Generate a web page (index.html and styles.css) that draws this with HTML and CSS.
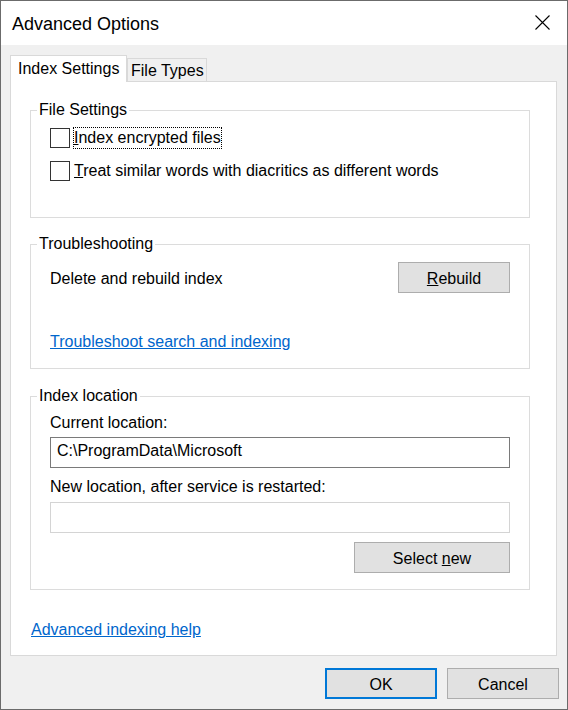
FILE: index.html
```
<!DOCTYPE html>
<html lang="en">
<head>
    <meta charset="UTF-8">
    <title>Advanced Options</title>
    <link rel="stylesheet" href="styles.css">
</head>
<body>
    <div class="window">
        <div class="titlebar">
            <span class="title">Advanced Options</span>
            <svg class="close" width="15" height="15" viewBox="0 0 15 15">
                <path d="M0.5 0.5 L14.5 14.5 M14.5 0.5 L0.5 14.5" stroke="#000" stroke-width="1.1" fill="none"/>
            </svg>
        </div>

        <div class="body">
            <div class="tabs">
                <div class="tab tab-active">Index Settings</div>
                <div class="tab">File Types</div>
            </div>

            <div class="panel">
                <fieldset class="group">
                    <legend>File Settings</legend>
                    <div class="group-body group-files">
                        <label class="check">
                            <span class="box"></span>
                            <span class="check-text focused"><u>I</u>ndex encrypted files</span>
                        </label>
                        <label class="check check-second">
                            <span class="box"></span>
                            <span class="check-text"><u>T</u>reat similar words with diacritics as different words</span>
                        </label>
                    </div>
                </fieldset>

                <fieldset class="group group-gap">
                    <legend>Troubleshooting</legend>
                    <div class="group-body group-trouble">
                        <div class="row">
                            <span class="row-label">Delete and rebuild index</span>
                            <button class="btn btn-rebuild"><u>R</u>ebuild</button>
                        </div>
                        <a href="#" class="link link-trouble">Troubleshoot search and indexing</a>
                    </div>
                </fieldset>

                <fieldset class="group group-gap-2">
                    <legend>Index location</legend>
                    <div class="group-body group-location">
                        <div class="field-label">Current location:</div>
                        <input class="field" type="text" value="C:\ProgramData\Microsoft" readonly>
                        <div class="field-label field-label-2">New location, after service is restarted:</div>
                        <input class="field field-empty" type="text" readonly>
                        <div class="row-end">
                            <button class="btn btn-select">Select <u>n</u>ew</button>
                        </div>
                    </div>
                </fieldset>

                <div class="help">
                    <a href="#" class="link">Advanced indexing help</a>
                </div>
            </div>

            <div class="footer">
                <button class="btn btn-ok">OK</button>
                <button class="btn">Cancel</button>
            </div>
        </div>
    </div>
</body>
</html>
```

FILE: styles.css
```
* {
    box-sizing: border-box;
}

body {
    margin: 0;
    padding: 0;
    font-family: "Liberation Sans", Arial, sans-serif;
    font-size: 16px;
    color: #000000;
    background-color: #ffffff;
}

.window {
    width: 568px;
    height: 710px;
    border: 1px solid #6b6b6b;
    display: flex;
    flex-direction: column;
}

.titlebar {
    height: 44px;
    display: flex;
    justify-content: space-between;
    align-items: flex-start;
    padding: 13px 17px 0 11px;
    background-color: #ffffff;
}

.title {
    font-size: 18px;
    line-height: 20px;
}

.close {
    display: block;
    margin-top: 1px;
}

.body {
    flex: 1;
    background-color: #f0f0f0;
    padding: 10px 10px 0 9px;
}

.tabs {
    height: 26px;
    display: flex;
    align-items: flex-end;
}

.tab {
    height: 23px;
    padding: 2px 2px 0 3px;
    line-height: 20px;
    border: 1px solid #d9d9d9;
    border-bottom: none;
    background-color: #f0f0f0;
    white-space: nowrap;
}

.tab-active {
    position: relative;
    z-index: 1;
    width: 117px;
    height: 27px;
    margin-bottom: -1px;
    padding: 3px 0 0 7px;
    background-color: #ffffff;
}

.panel {
    height: 575px;
    border: 1px solid #d9d9d9;
    background-color: #ffffff;
    padding: 18px 26px 15px 19px;
}

.group {
    margin: 0;
    padding: 0;
    min-width: 0;
    border: 1px solid #dcdcdc;
}

.group legend {
    margin-left: 6px;
    padding: 0 2px;
    line-height: 20px;
}

.group-gap {
    margin-top: 16px;
}

.group-gap-2 {
    margin-top: 17px;
}

.group-body {
    padding: 7px 19px 16px;
}

.group-files {
    padding-bottom: 35px;
}

.group-trouble {
    padding-top: 8px;
}

.check {
    display: flex;
    align-items: center;
    height: 22px;
}

.check-second {
    margin-top: 11px;
}

.box {
    width: 20px;
    height: 20px;
    border: 1px solid #333333;
    background-color: #ffffff;
    margin-right: 3px;
}

.check-text {
    line-height: 20px;
    border: 1px dotted transparent;
    white-space: nowrap;
}

.check-text.focused {
    border-color: #000000;
}

.row {
    display: flex;
    justify-content: space-between;
    align-items: center;
}

.row-label {
    line-height: 20px;
    padding-top: 2px;
}

.btn {
    height: 31px;
    width: 112px;
    padding: 2px 0 0;
    font-family: inherit;
    font-size: 16px;
    line-height: 20px;
    color: #000000;
    background-color: #e1e1e1;
    border: 1px solid #adadad;
    border-radius: 0;
}

.btn-select {
    width: 156px;
}

.btn-ok {
    border: 2px solid #0078d7;
}

.link {
    color: #0066cc;
    text-decoration: underline;
    line-height: 20px;
}

.link-trouble {
    display: block;
    margin-top: 39px;
    width: max-content;
}

.field-label {
    line-height: 20px;
}

.field-label-2 {
    margin-top: 9px;
}

.field {
    display: block;
    width: 100%;
    height: 31px;
    margin-top: 4px;
    padding: 0 6px 3px;
    font-family: inherit;
    font-size: 16px;
    color: #000000;
    border: 1px solid #7a7a7a;
    border-radius: 0;
    background-color: #ffffff;
    outline: none;
}

.field-empty {
    margin-top: 5px;
    border-color: #d4d4d4;
}

.row-end {
    display: flex;
    justify-content: flex-end;
    margin-top: 9px;
}

.help {
    margin-top: 30px;
    padding-left: 1px;
}

.footer {
    display: flex;
    justify-content: flex-end;
    gap: 10px;
    padding: 12px 8px 10px 0;
    margin-right: -10px;
}
```
